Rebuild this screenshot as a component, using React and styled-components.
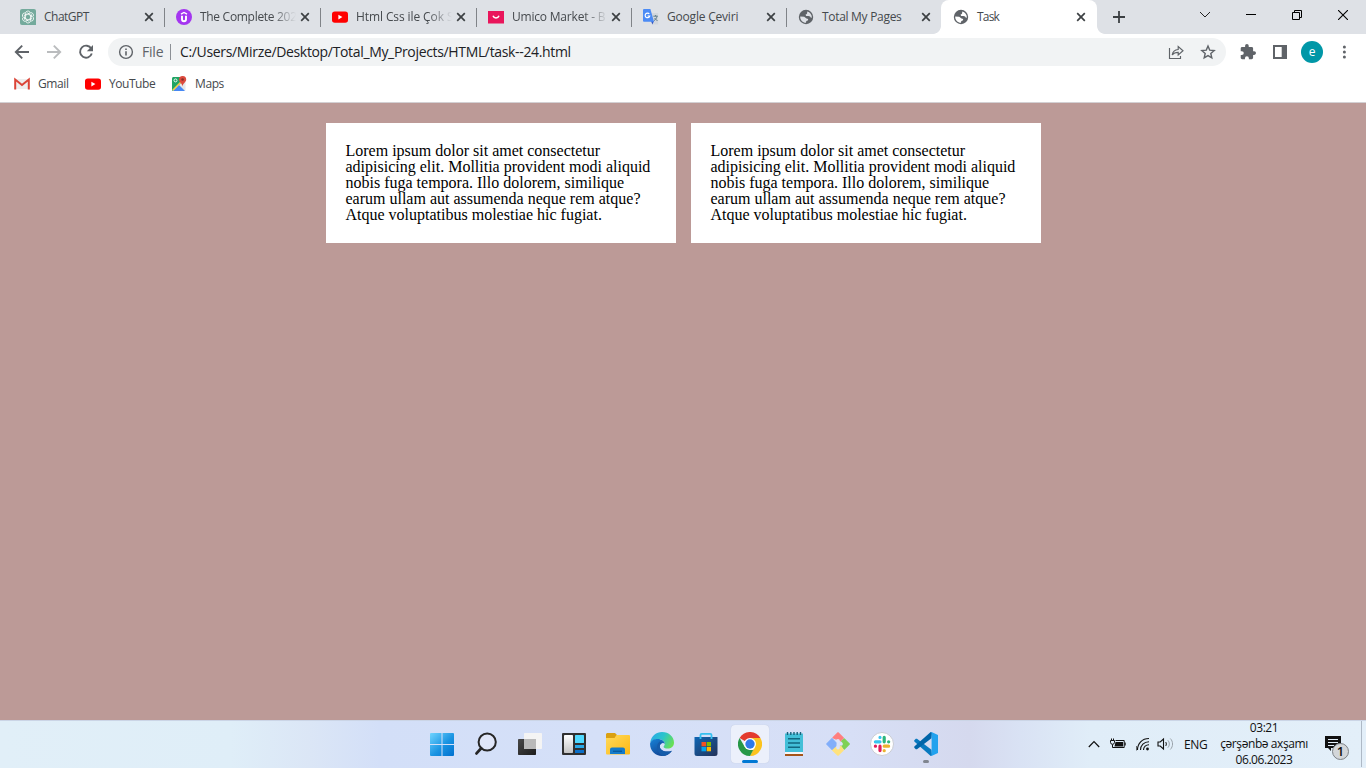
import React from 'react';
import styled, { createGlobalStyle, css } from 'styled-components';

const GlobalStyle = createGlobalStyle`
  *, *::before, *::after { box-sizing: border-box; }
  html, body { margin: 0; padding: 0; height: 100%; overflow: hidden; }
  svg { display: block; flex: none; }
`;

const Screen = styled.div`
  width: 1366px;
  height: 768px;
  display: flex;
  flex-direction: column;
  font-family: "Open Sans", "Noto Sans", sans-serif;
  overflow: hidden;
`;

/* ---------- window chrome ---------- */

const TabStrip = styled.div`
  height: 34px;
  flex: none;
  display: flex;
  background: #dee1e6;
  padding-left: 8px;
`;

const TabItem = styled.div`
  position: relative;
  width: ${(p) => p.$width}px;
  height: 34px;
  flex: none;
  display: flex;
  align-items: center;
  padding: 0 8px 0 12px;
  ${(p) => p.$divider && css`
    &::after {
      content: '';
      position: absolute;
      right: -1px;
      top: 8px;
      width: 1px;
      height: 19px;
      background: #808388;
    }
  `}
  ${(p) => p.$active && css`
    background: #fff;
    border-radius: 8px 8px 0 0;
    padding-right: 9px;
    &::before, &::after {
      content: '';
      position: absolute;
      bottom: 0;
      width: 8px;
      height: 8px;
    }
    &::before {
      left: -8px;
      background: radial-gradient(circle at 0 0, transparent 7.5px, #fff 8.2px);
    }
    &::after {
      right: -8px;
      background: radial-gradient(circle at 100% 0, transparent 7.5px, #fff 8.2px);
    }
  `}
`;

const TabTitle = styled.span`
  width: 97px;
  margin-left: 8px;
  font-size: 12px;
  line-height: 18px;
  letter-spacing: ${(p) => p.$track}px;
  color: #45494d;
  white-space: nowrap;
  mask-image: ${(p) => (p.$fade ? 'linear-gradient(90deg, #000 72px, transparent 96px)' : 'none')};
`;

const CloseSlot = styled.span`
  margin-left: auto;
  width: 14px;
  display: flex;
  justify-content: center;
`;

const NewTab = styled.div`
  width: 28px;
  display: flex;
  align-items: center;
  justify-content: center;
  margin-left: 8px;
`;

const WindowControls = styled.div`
  margin-left: auto;
  display: flex;
  height: 29px;
  align-items: center;
`;

const ControlButton = styled.div`
  width: 46px;
  display: flex;
  justify-content: center;
`;

const Toolbar = styled.div`
  height: 36px;
  flex: none;
  display: flex;
  align-items: center;
  background: #fff;
  padding: 0 12px;
`;

const NavButton = styled.div`
  width: 32px;
  display: flex;
  justify-content: center;
  &:first-child { width: 20px; margin-right: 6px; }
`;

const Omnibox = styled.div`
  width: 1118px;
  height: 28px;
  margin-left: 6px;
  border-radius: 14px;
  background: #f1f3f4;
  display: flex;
  align-items: center;
  padding: 0 10px;
`;

const SchemeLabel = styled.span`
  width: 29px;
  margin-left: 8px;
  font-size: 14px;
  line-height: 16px;
  letter-spacing: -0.2px;
  color: #5f6368;
  border-right: 1px solid #8c9095;
`;

const Address = styled.span`
  margin-left: 9px;
  padding-bottom: 1px;
  font-size: 14px;
  letter-spacing: ${(p) => p.$track}px;
  color: #202124;
  white-space: nowrap;
`;

const OmniActions = styled.div`
  margin-left: auto;
  display: flex;
  align-items: center;
  gap: 16px;
`;

const ToolbarActions = styled.div`
  margin-left: auto;
  display: flex;
  align-items: center;
`;

const ActionSlot = styled.div`
  width: 32px;
  display: flex;
  justify-content: center;
  &:last-child { width: 32px; margin-right: -6px; }
`;

const Avatar = styled.div`
  width: 22px;
  height: 22px;
  border-radius: 50%;
  background: #0097a7;
  color: #fff;
  font-size: 12px;
  line-height: 21px;
  text-align: center;
`;

const BookmarksBar = styled.div`
  height: 33px;
  flex: none;
  display: flex;
  padding: 0 0 4px 14px;
  background: #fff;
  border-bottom: 1px solid #d3d0d3;
`;

const Bookmark = styled.div`
  width: ${(p) => p.$width}px;
  display: flex;
  align-items: center;
  gap: 8px;
  font-size: 12px;
  letter-spacing: ${(p) => p.$track}px;
  color: #45494d;
`;

const BookmarkTitle = styled.span`
  padding-bottom: 1px;
`;

/* ---------- page ---------- */

const Page = styled.main`
  flex: 1;
  display: flex;
  justify-content: center;
  align-items: flex-start;
  gap: 15px;
  padding-top: 20px;
  background: #bc9a97;
`;

const Card = styled.p`
  width: 350px;
  margin: 0;
  padding: 20px;
  background: #fff;
  color: #000;
  font: 16px/16px "Liberation Serif", "Times New Roman", serif;
`;

/* ---------- taskbar ---------- */

const Taskbar = styled.footer`
  height: 48px;
  flex: none;
  display: grid;
  grid-template-columns: 420px 530px 416px;
  grid-template-rows: 47px;
  background: linear-gradient(90deg, #e1eff8 0, #dfeef8 230px, #dbe6f6 310px, #d3dff8 380px, #d5e0f8 600px, #d7dff6 850px, #d5d9ee 970px, #d9e2f4 1020px, #e0edf8 1090px, #e3eff9 1366px);
  border-top: 1px solid #cbd5e6;
`;

const Apps = styled.div`
  grid-column: 2;
  display: flex;
  align-items: center;
  padding-bottom: 1px;
`;

const AppButton = styled.div`
  position: relative;
  width: 38px;
  height: 38px;
  margin: 0 3px;
  border-radius: 4px;
  display: flex;
  align-items: center;
  justify-content: center;
  background: ${(p) => (p.$open ? '#ecf0fb' : 'transparent')};
  box-shadow: ${(p) => (p.$open ? '0 0 1px #b5bdd0' : 'none')};
`;

const Indicator = styled.span`
  position: absolute;
  bottom: 0;
  left: calc(50% - ${(p) => p.$width / 2}px);
  width: ${(p) => p.$width}px;
  height: 3px;
  border-radius: 2px;
  background: ${(p) => p.$color};
`;

const Tray = styled.div`
  grid-column: 3;
  display: flex;
  align-items: center;
  padding: 0 0 1px 137px;
  color: #111;
  font-size: 12px;
`;

const TrayIcon = styled.div`
  width: ${(p) => p.$width}px;
  display: flex;
  justify-content: center;
`;

const Language = styled.span`
  width: 28px;
  margin-left: 5px;
  letter-spacing: -0.4px;
`;

const Clock = styled.div`
  width: 100px;
  text-align: center;
  line-height: 16px;
  letter-spacing: ${(p) => p.$track}px;
  white-space: nowrap;
  margin-left: 2px;
`;

const Notifications = styled.div`
  position: relative;
  margin-left: 11px;
`;

const Count = styled.span`
  position: absolute;
  left: 7px;
  top: 7px;
  width: 17px;
  height: 17px;
  border: 1px solid #7d8287;
  border-radius: 50%;
  background: #d3d6d9;
  font-size: 13px;
  font-weight: 600;
  line-height: 14px;
  text-align: center;
`;

const ShowDesktop = styled.div`
  width: 5px;
  height: 46px;
  margin-left: auto;
  border-left: 1px solid #aeb9c6;
`;

/* ---------- icons ---------- */

const ChatGptIcon = () => (
  <svg width="16" height="16" viewBox="0 0 16 16">
    <path d="M2 0h12a2 2 0 0 1 2 2v14H2a2 2 0 0 1-2-2V2a2 2 0 0 1 2-2z" fill="#74aa9c" />
    <g fill="none" stroke="#fff" strokeWidth=".8" strokeLinejoin="round">
      {[0, 60, 120, 180, 240, 300].map((a) => (
        <path key={a} transform={`rotate(${a} 8 8)`} d="M5.400 9.300V4.600A2.500 2.500 0 0 1 10 3.200M7.200 3.800 10.200 5.500" />
      ))}
    </g>
  </svg>
);

const UdemyIcon = () => (
  <svg width="16" height="16" viewBox="0 0 16 16">
    <circle cx="8" cy="8" r="8" fill="#a435f0" />
    <path d="M5 5.200 8 3.500l3 1.700" fill="none" stroke="#fff" strokeWidth="1.400" />
    <path d="M6 6.800v3.400c0 2.700 4 2.700 4 0V6.800" fill="none" stroke="#fff" strokeWidth="1.900" />
  </svg>
);

const YouTubeIcon = () => (
  <svg width="16" height="16" viewBox="0 0 16 16">
    <rect y="2.400" width="16" height="11.400" rx="2.800" fill="#f00" />
    <path d="M6.400 5.800v4.600l4-2.300z" fill="#fff" />
  </svg>
);

const UmicoIcon = () => (
  <svg width="16" height="16" viewBox="0 0 16 16">
    <path d="M0 2h16v12.500H0z" fill="#e9155b" />
    <path d="M5 6.800c1 2.800 5 2.800 6 0" fill="none" stroke="#fff" strokeWidth="1.500" />
  </svg>
);

const TranslateIcon = () => (
  <svg width="16" height="16" viewBox="0 0 16 16">
    <path d="M7 4h8.200v11.500H9z" fill="#d3d7dc" />
    <path d="M8 12h3l-1.600 3.500z" fill="#3358c4" />
    <path d="M1 0h6.400L11 12.800H1a1 1 0 0 1-1-1V1a1 1 0 0 1 1-1z" fill="#4c8bf5" />
    <path d="M6.300 5A2.300 2.300 0 1 0 6.700 7H4.600" fill="none" stroke="#fff" strokeWidth="1.200" />
    <path d="M10.300 7.200h4.500M12.600 6v1.200M14 7.400c-.5 2-1.500 3.300-3 4.200M11.500 9l3 3" fill="none" stroke="#607d8b" strokeWidth="1" />
  </svg>
);

const GlobeIcon = ({ land = '#dee1e6' }) => (
  <svg width="16" height="16" viewBox="0 0 16 16">
    <circle cx="8" cy="8" r="7.200" fill="#5f6368" />
    <path d="M9.300 2.500c2.700.7 4.700 3 4.600 6.100-.8.2-1.400-.1-1.800-1.100L10.500 7H8.200l-.7-1.300L9 4.800zM2.200 7.500l4 .3 2.300 1.700 1.700.4-.4 1.500-1.500.7-.3 1.700C4.700 13.700 2 11 2.200 7.500z" fill={land} />
  </svg>
);

const CloseIcon = () => (
  <svg width="10" height="10" viewBox="0 0 10 10">
    <path d="M1.200 1.200l7.600 7.600M8.800 1.200L1.200 8.800" stroke="#3c4043" strokeWidth="1.700" />
  </svg>
);

const BackIcon = ({ flip, color }) => (
  <svg width="16" height="16" viewBox="0 0 16 16">
    <path transform={flip ? 'matrix(-1 0 0 1 16 0)' : undefined} d="M15 8H2M8.200 1.600 1.800 8l6.400 6.400" fill="none" stroke={color} strokeWidth="1.900" />
  </svg>
);

const ReloadIcon = () => (
  <svg width="16" height="16" viewBox="0 0 16 16">
    <path d="M13.300 4.700A6 6 0 1 0 13.800 9.500" fill="none" stroke="#5f6368" strokeWidth="1.900" />
    <path d="M15 1v6.200H8.800z" fill="#5f6368" />
  </svg>
);

const InfoIcon = () => (
  <svg width="16" height="16" viewBox="0 0 16 16">
    <circle cx="8" cy="8" r="6.400" fill="none" stroke="#5f6368" strokeWidth="1.400" />
    <path d="M8 7.200v4.200M8 4.400V6" stroke="#5f6368" strokeWidth="1.600" />
  </svg>
);

const ShareIcon = () => (
  <svg width="16" height="16" viewBox="0 0 16 16">
    <path d="M1.500 4v10.500h11v-2.500M4.200 11c.5-3.500 2.500-5.300 6-5.500V2.500l4.800 4.300-4.800 4.200V8.400c-2.500 0-4.500.6-6 2.600z" fill="none" stroke="#5f6368" strokeWidth="1.150" />
  </svg>
);

const StarIcon = () => (
  <svg width="16" height="16" viewBox="0 0 16 16">
    <path d="M8 2l1.700 4.100 4.500.4-3.400 3 1 4.400L8 11.600l-3.800 2.300 1-4.400-3.400-3 4.500-.4z" fill="none" stroke="#5f6368" strokeWidth="1.400" />
  </svg>
);

const PuzzleIcon = () => (
  <svg width="16" height="16" viewBox="1 1 22 22">
    <path d="M20.500 11H19V7a2 2 0 0 0-2-2h-4V3.500a2.500 2.500 0 0 0-5 0V5H4a2 2 0 0 0-2 2v3.800h1.500a2.700 2.700 0 0 1 0 5.400H2V20c0 1.100.9 2 2 2h3.800v-1.500a2.700 2.700 0 0 1 5.400 0V22H17a2 2 0 0 0 2-2v-4h1.500a2.500 2.500 0 0 0 0-5z" fill="#5f6368" />
  </svg>
);

const SidePanelIcon = () => (
  <svg width="14" height="14" viewBox="0 0 14 14">
    <path d="M0 0h14v14H0zM2 2v10h6.700V2z" fill="#5f6368" fillRule="evenodd" />
  </svg>
);

const MenuIcon = () => (
  <svg width="4" height="14" viewBox="0 0 4 14" fill="#5f6368">
    <circle cx="2.400" cy="2" r="1.500" /><circle cx="2.400" cy="7" r="1.500" /><circle cx="2.400" cy="12" r="1.500" />
  </svg>
);

const GmailIcon = () => (
  <svg width="16" height="16" viewBox="0 0 16 16">
    <path d="M1 3h14v10H1z" fill="#eee" />
    <path d="M1.200 13.500V3.500L8 9l6.800-5.500v10" fill="none" stroke="#db4437" strokeWidth="2" />
  </svg>
);

const MapsIcon = () => (
  <svg width="16" height="16" viewBox="0 0 16 16">
    <path d="M1.500 1.500H10l4.500 5v8h-13z" fill="#e5e8ea" />
    <path d="M1 2.500C1 1.700 1.700 1 2.500 1H9l1 6-8.500 8C1 14.500 1 14 1 13z" fill="#1fa463" />
    <path d="M2 14.800 8 9l6 6H2z" fill="#4688f4" />
    <path d="M1.800 14.300 11 5" stroke="#f5ce47" strokeWidth="1.600" />
    <circle cx="4.500" cy="4.400" r="1.500" fill="none" stroke="#fff" strokeWidth=".9" />
    <path d="M11.500 0A3.500 3.500 0 0 0 8 3.500c0 2.600 3 3.500 3.500 7 .5-3.500 3.700-4.400 3.700-7A3.600 3.600 0 0 0 11.500 0z" fill="#dc4b3e" />
    <circle cx="11.600" cy="3.500" r="1.300" fill="#872f29" />
  </svg>
);

const StartIcon = () => (
  <svg width="24" height="24" viewBox="0 0 24 24">
    <defs>
      <linearGradient id="start" x1="0" y1="0" x2="1" y2="1"><stop stopColor="#70d4ff" /><stop offset=".55" stopColor="#1a94e2" /><stop offset="1" stopColor="#0070cf" /></linearGradient>
    </defs>
    <path d="M1 1h10.500v11H0V2a1 1 0 0 1 1-1zM12.500 1H23a1 1 0 0 1 1 1v10H12.500zM0 13h11.500v11H1a1 1 0 0 1-1-1zM12.500 13H24v10a1 1 0 0 1-1 1H12.500z" fill="url(#start)" />
  </svg>
);

const SearchIcon = () => (
  <svg width="24" height="24" viewBox="0 0 24 24">
    <circle cx="13.200" cy="10" r="8.600" fill="#e0e6f8" stroke="#262626" strokeWidth="2" />
    <path d="M7.200 16.200 2.500 21.400" stroke="#262626" strokeWidth="2.800" strokeLinecap="round" />
  </svg>
);

const TaskViewIcon = () => (
  <svg width="24" height="24" viewBox="0 0 24 24">
    <defs>
      <linearGradient id="dark" x1="0" y1="0" x2="1" y2="1"><stop stopColor="#484848" /><stop offset="1" stopColor="#1c1c1c" /></linearGradient>
    </defs>
    <rect x="0" y="7" width="18" height="16" rx=".7" fill="url(#dark)" />
    <rect x="6" y="1" width="18" height="16" rx=".7" fill="#f4f4f4" />
    <path d="M6 7h12v10H6z" fill="#b9b9b9" />
  </svg>
);

const WidgetsIcon = () => (
  <svg width="24" height="24" viewBox="0 0 24 24">
    <defs>
      <linearGradient id="pane" x1="0" y1="0" x2="0" y2="1"><stop stopColor="#fff" /><stop offset="1" stopColor="#c4c4c4" /></linearGradient>
    </defs>
    <rect y="1" width="24" height="22" rx="1" fill="#303030" />
    <rect x="2" y="3" width="9" height="18" rx=".8" fill="url(#pane)" />
    <rect x="13" y="3" width="9" height="8" rx=".5" fill="#50d9ff" />
    <rect x="13" y="13" width="9" height="3" fill="#29a9e8" />
    <rect x="13" y="18" width="9" height="3" fill="#0c70c8" />
  </svg>
);

const ExplorerIcon = () => (
  <svg width="24" height="24" viewBox="0 0 24 24">
    <defs>
      <linearGradient id="folder" x1="0" y1="0" x2="1" y2="1"><stop stopColor="#ffda5c" /><stop offset="1" stopColor="#fdb813" /></linearGradient>
    </defs>
    <path d="M1 1h8l2 2h12v5H0V2z" fill="#daa012" />
    <path d="M0 6h8.500l2-3H23a1 1 0 0 1 1 1v17.500a1 1 0 0 1-1 1H1a1 1 0 0 1-1-1z" fill="url(#folder)" />
    <path d="M4 22v-4.500a2 2 0 0 1 2-2h11a2 2 0 0 1 2 2V22z" fill="#147bca" />
    <path d="M7 18.600h9V20H7z" fill="#075b9d" />
  </svg>
);

const EdgeIcon = () => (
  <svg width="24" height="24" viewBox="0 0 24 24">
    <defs>
      <linearGradient id="edgeTop" x1="0" y1=".2" x2="1" y2=".6"><stop stopColor="#2aa9e8" /><stop offset=".5" stopColor="#2bc4cb" /><stop offset="1" stopColor="#69e052" /></linearGradient>
      <linearGradient id="edgeLow" x1="0" y1="0" x2=".7" y2="1"><stop stopColor="#1683d8" /><stop offset="1" stopColor="#123e8c" /></linearGradient>
    </defs>
    <path d="M.2 10.500C1.300 4 6.300 0 12 0c7 0 12 5 12 10.500 0 4-3 6.100-6.300 6.100-2.700 0-4.100-1-4.100-1.900 0-.8 1.200-1.200 1.200-3 0-2.600-2.800-4.500-6-4.500C4.500 7.200 1 9 .2 10.500z" fill="url(#edgeTop)" />
    <path d="M.1 11.500C.7 8.300 4.300 7 7.600 7c4.200 0 7.200 2.200 7.200 5-1.500-2-5-.6-5 2.300 0 4.500 6.200 6.600 12.100 4.400A12 12 0 0 1 12 24C5 24-.3 18.200.1 11.500z" fill="url(#edgeLow)" />
    <path d="M9.800 9.600c-4 2.500-4 9.600 2.200 14.400 4 0 7.800-2 10-5.300-5.800 2.200-12.200.2-12.200-4.400 0-2 1.500-3.500 3-3.300-.8-.8-1.800-1.300-3-1.400z" fill="#155caa" />
  </svg>
);

const StoreIcon = () => (
  <svg width="24" height="24" viewBox="0 0 24 24">
    <defs>
      <linearGradient id="store" x1="0" y1="0" x2="1" y2="1"><stop stopColor="#0e66b5" /><stop offset="1" stopColor="#253257" /></linearGradient>
    </defs>
    <path d="M.5 5h23v16.500a2.500 2.500 0 0 1-2.500 2.500H3a2.500 2.500 0 0 1-2.500-2.500z" fill="url(#store)" />
    <path d="M6.500 7V3A1.200 1.200 0 0 1 7.700 1.800h8.600A1.200 1.200 0 0 1 17.500 3v4" fill="none" stroke="#35c0ef" strokeWidth="1.800" />
    <path d="M7.500 10H12v4.300H7.500z" fill="#f25022" /><path d="M12.700 10H17v4.300h-4.300z" fill="#7fba00" />
    <path d="M7.500 15H12v4.300H7.500z" fill="#00a4ef" /><path d="M12.700 15H17v4.300h-4.300z" fill="#ffb900" />
  </svg>
);

const ChromeIcon = () => (
  <svg width="24" height="24" viewBox="0 0 24 24">
    <path d="M12 12 1.600 6A12 12 0 0 1 22.400 6z" fill="#e33b2e" />
    <path d="M12 6h10.400A12 12 0 0 1 12 24l5.200-9z" fill="#fcc31e" />
    <path d="M1.600 6 6.800 15 12 18h5.200-1.700L12 24A12 12 0 0 1 1.600 6z" fill="#279847" />
    <path d="M17.200 15 12 24l3-6z" fill="#fcc31e" />
    <circle cx="12" cy="12" r="6" fill="#fff" /><circle cx="12" cy="12" r="4.700" fill="#3079e9" />
  </svg>
);

const NotepadIcon = () => (
  <svg width="24" height="24" viewBox="0 0 24 24">
    <path d="M3 20h18v4H3z" fill="#a55419" /><path d="M3 19h18v3H3z" fill="#f5f6f7" />
    <path d="M3 1.500h18V20H3z" fill="#43bfd8" />
    <path d="M5.500 0v3M8.800 0v3M12 0v3M15.200 0v3M18.500 0v3" stroke="#17617b" strokeWidth="1.400" />
    <path d="M6 6.700h12M6 11h12M6 15.200h12" stroke="#126780" strokeWidth="1.500" />
  </svg>
);

const GitIcon = () => (
  <svg width="24" height="24" viewBox="0 0 24 24">
    <g strokeLinejoin="round" strokeWidth="1.200">
      <path d="M12 .8 17.300 6 14.500 8.800 12 7.200 9.500 6.800 7 5.600z" fill="#ff7f7f" stroke="#ff7f7f" />
      <path d="m18.300 7 5 5-5 5-3.500-3.800L17 11l-1.300-1.800z" fill="#7fd154" stroke="#7fd154" />
      <path d="M12.500 17.500 15 14.500l2.300 3.500L12 23.200 6.500 18l2.800-3z" fill="#ffe27d" stroke="#ffe27d" />
      <path d="m6 6.700 4 4.200-.2 3L6 17.300.8 12z" fill="#82aefa" stroke="#82aefa" />
    </g>
    <g fill="#dce3f8"><circle cx="12" cy="8.800" r="1.800" /><circle cx="15.200" cy="12" r="1.700" /><circle cx="12" cy="15.800" r="1.800" /><path d="M11.300 8h1.400v8h-1.400z" /></g>
  </svg>
);

const SlackIcon = () => (
  <svg width="24" height="24" viewBox="0 0 24 24">
    <circle cx="12" cy="12" r="11.500" fill="#fff" stroke="#c9ccd4" />
    <g strokeWidth="3.200" strokeLinecap="round">
      <path d="M10 5.400v.1M5.400 9.800H10" stroke="#36c5f0" />
      <path d="M14.200 5.400v4.400M18.600 9.800h.1" stroke="#2eb67d" />
      <path d="M14.200 14.200h4.400M14.200 18.600v.1" stroke="#ecb22e" />
      <path d="M10 14.200v4.400M5.400 14.200h.1" stroke="#e01e5a" />
    </g>
  </svg>
);

const VsCodeIcon = () => (
  <svg width="24" height="24" viewBox="0 0 24 24">
    <path d="M17.500 17.700 3 6.700l-1.200.1L.3 8.200v1.200L16.700 24l1.300-.4z" fill="#0879bf" />
    <path d="M17.500 6.300 3 17.300l-1.200-.1L.3 15.800v-1.200L16.700 0l1.300.4z" fill="#0065a9" />
    <path d="M17.500 0 24 3v18l-6.500 3c-.4.200-1 0-1.400-.4.700.6 1.500.2 1.500-.7V1.100c0-.9-.9-1.300-1.500-.7.4-.4 1-.6 1.400-.4z" fill="#22a2ee" />
  </svg>
);

const BatteryIcon = () => (
  <svg width="16" height="12" viewBox="0 0 16 12">
    <path d="M5.500 2.500h8.700v7H3.500" fill="none" stroke="#111" />
    <path d="M5.500 4h7.500v4.500H4.500zM14.500 4.500h1.200v3h-1.200z" fill="#111" />
    <path d="M.5 2.500h4v1.800a2 2 0 0 1-4 0zM1.500.5v2M3.500.5v2M2.500 6.500v3h2" fill="none" stroke="#111" />
  </svg>
);

const WifiIcon = () => (
  <svg width="14" height="14" viewBox="0 0 14 14">
    <g fill="none" stroke="#111" strokeWidth="1.100">
      <path d="M1.500 13C1.500 6.500 6 1.500 13 1.500M4.500 13c0-4.500 3.500-8.300 8.500-8.300M7.500 13c0-3 2.500-5.300 5.500-5.300" />
      <path d="M.5 9v4.500" strokeWidth=".6" />
    </g>
    <circle cx="11.500" cy="12" r="1.400" fill="#111" />
  </svg>
);

const SpeakerIcon = () => (
  <svg width="18" height="14" viewBox="0 0 18 14">
    <path d="M2 5h2.200L7.500 2v10L4.200 9H2z" fill="none" stroke="#111" strokeWidth="1.100" />
    <path d="M9.700 5c.8 1 .8 3 0 4" fill="none" stroke="#111" />
    <path d="M11.800 3.300c2 2 2 5.400 0 7.400M14.300 1.500c3 3 3 8 0 11" fill="none" stroke="#9aa3ab" />
  </svg>
);

const ActiveGlobeIcon = () => <GlobeIcon land="#fff" />;

const tabs = [
  { title: 'ChatGPT', Icon: ChatGptIcon, width: 156, track: -0.5, divider: true },
  { title: 'The Complete 202', Icon: UdemyIcon, width: 156, track: -0.3, divider: true, fade: true },
  { title: 'Html Css ile Çok S', Icon: YouTubeIcon, width: 156, track: -0.1, divider: true, fade: true },
  { title: 'Umico Market - B', Icon: UmicoIcon, width: 155, track: -0.2, divider: true, fade: true },
  { title: 'Google Çeviri', Icon: TranslateIcon, width: 155, track: -0.2, divider: true },
  { title: 'Total My Pages', Icon: GlobeIcon, width: 155, track: -0.3 },
  { title: 'Task', Icon: ActiveGlobeIcon, width: 156, track: -0.8, active: true },
];

const bookmarks = [
  { title: 'Gmail', Icon: GmailIcon, width: 71, track: -0.4 },
  { title: 'YouTube', Icon: YouTubeIcon, width: 86, track: -0.45 },
  { title: 'Maps', Icon: MapsIcon, width: 60, track: -0.4 },
];

const apps = [
  { name: 'start', Icon: StartIcon },
  { name: 'search', Icon: SearchIcon },
  { name: 'task-view', Icon: TaskViewIcon },
  { name: 'widgets', Icon: WidgetsIcon },
  { name: 'explorer', Icon: ExplorerIcon },
  { name: 'edge', Icon: EdgeIcon },
  { name: 'store', Icon: StoreIcon },
  { name: 'chrome', Icon: ChromeIcon, open: true, bar: 16, color: '#0078d4' },
  { name: 'notepad', Icon: NotepadIcon },
  { name: 'git', Icon: GitIcon },
  { name: 'slack', Icon: SlackIcon },
  { name: 'vscode', Icon: VsCodeIcon, bar: 6, color: '#80858f' },
];

const lorem = 'Lorem ipsum dolor sit amet consectetur adipisicing elit. Mollitia provident modi aliquid nobis fuga tempora. Illo dolorem, similique earum ullam aut assumenda neque rem atque? Atque voluptatibus molestiae hic fugiat.';

export default function App() {
  return (
    <Screen>
      <GlobalStyle />
      <TabStrip>
        {tabs.map(({ title, Icon, width, track, divider, fade, active }) => (
          <TabItem key={title} $width={width} $divider={divider} $active={active}>
            <Icon />
            <TabTitle $track={track} $fade={fade}>{title}</TabTitle>
            <CloseSlot><CloseIcon /></CloseSlot>
          </TabItem>
        ))}
        <NewTab>
          <svg width="12" height="12" viewBox="0 0 12 12"><path d="M6 0v12M0 6h12" stroke="#3c4043" strokeWidth="1.800" /></svg>
        </NewTab>
        <WindowControls>
          <ControlButton>
            <svg width="12" height="8" viewBox="0 0 12 8"><path d="M1 1l5 5 5-5" fill="none" stroke="#222" /></svg>
          </ControlButton>
          <ControlButton>
            <svg width="10" height="1" viewBox="0 0 10 1"><path d="M0 0h10v1H0z" /></svg>
          </ControlButton>
          <ControlButton>
            <svg width="10" height="10" viewBox="0 0 10 10"><path d="M.5 2.500h7v7h-7zM2.500 2V.5h7v7H8" fill="none" stroke="#000" /></svg>
          </ControlButton>
          <ControlButton>
            <svg width="10" height="10" viewBox="0 0 10 10"><path d="M0 0l10 10M10 0L0 10" stroke="#000" strokeWidth="1.100" /></svg>
          </ControlButton>
        </WindowControls>
      </TabStrip>
      <Toolbar>
        <NavButton><BackIcon color="#5f6368" /></NavButton>
        <NavButton><BackIcon flip color="#babcbe" /></NavButton>
        <NavButton><ReloadIcon /></NavButton>
        <Omnibox>
          <InfoIcon />
          <SchemeLabel>File</SchemeLabel>
          <Address $track={-0.34}>C:/Users/Mirze/Desktop/Total_My_Projects/HTML/task--24.html</Address>
          <OmniActions><ShareIcon /><StarIcon /></OmniActions>
        </Omnibox>
        <ToolbarActions>
          <ActionSlot><PuzzleIcon /></ActionSlot>
          <ActionSlot><SidePanelIcon /></ActionSlot>
          <ActionSlot><Avatar>e</Avatar></ActionSlot>
          <ActionSlot><MenuIcon /></ActionSlot>
        </ToolbarActions>
      </Toolbar>
      <BookmarksBar>
        {bookmarks.map(({ title, Icon, width, track }) => (
          <Bookmark key={title} $width={width} $track={track}>
            <Icon />
            <BookmarkTitle>{title}</BookmarkTitle>
          </Bookmark>
        ))}
      </BookmarksBar>
      <Page>
        <Card>{lorem}</Card>
        <Card>{lorem}</Card>
      </Page>
      <Taskbar>
        <Apps>
          {apps.map(({ name, Icon, open, bar, color }) => (
            <AppButton key={name} $open={open}>
              <Icon />
              {bar && <Indicator $width={bar} $color={color} />}
            </AppButton>
          ))}
        </Apps>
        <Tray>
          <TrayIcon $width={14}>
            <svg width="12" height="8" viewBox="0 0 12 8"><path d="M.8 7 6 1.500 11.200 7" fill="none" stroke="#111" strokeWidth="1.200" /></svg>
          </TrayIcon>
          <TrayIcon $width={34}><BatteryIcon /></TrayIcon>
          <TrayIcon $width={16}><WifiIcon /></TrayIcon>
          <TrayIcon $width={28}><SpeakerIcon /></TrayIcon>
          <Language>ENG</Language>
          <Clock $track={-0.42}>
            <div>03:21</div>
            <div>çərşənbə axşamı</div>
            <div>06.06.2023</div>
          </Clock>
          <Notifications>
            <svg width="16" height="16" viewBox="0 0 16 16">
              <path d="M0 0h16v12H6v3l-3-3H0z" fill="#111" />
              <path d="M3 3.500h10M3 6.500h10M3 9.500h6" stroke="#e3eff9" />
            </svg>
            <Count>1</Count>
          </Notifications>
          <ShowDesktop />
        </Tray>
      </Taskbar>
    </Screen>
  );
}
